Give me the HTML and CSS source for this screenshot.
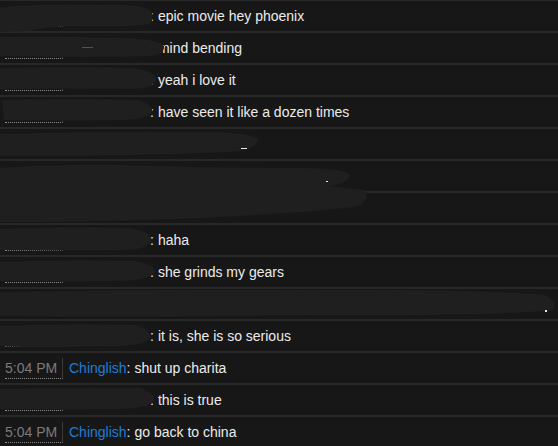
FILE: index.html
```html
<!DOCTYPE html>
<html>
<head>
<meta charset="utf-8">
<link rel="stylesheet" href="styles.css">
</head>
<body>
<div class="chat">
  <div class="row"><span class="time">5:03 PM</span><span class="name hidden">user</span><span class="sep">:</span><span class="msg">epic movie hey phoenix</span></div>
  <div class="row"><span class="time">5:03 PM</span><span class="name hidden">user</span><span class="sep">:</span><span class="msg">mind bending</span></div>
  <div class="row"><span class="time">5:03 PM</span><span class="name hidden">user</span><span class="sep">:</span><span class="msg">yeah i love it</span></div>
  <div class="row"><span class="time">5:03 PM</span><span class="name hidden">user</span><span class="sep">:</span><span class="msg">have seen it like a dozen times</span></div>
  <div class="row"><span class="time">5:03 PM</span></div>
  <div class="row"><span class="time notime"></span></div>
  <div class="row"><span class="time">5:03 PM</span></div>
  <div class="row"><span class="time">5:04 PM</span><span class="name hidden">user</span><span class="sep">:</span><span class="msg">haha</span></div>
  <div class="row"><span class="time">5:04 PM</span><span class="name hidden">user</span><span class="sep">:</span><span class="msg">she grinds my gears</span></div>
  <div class="row"><span class="time short">5:04 PM</span></div>
  <div class="row"><span class="time">5:04 PM</span><span class="name hidden">user</span><span class="sep">:</span><span class="msg">it is, she is so serious</span></div>
  <div class="row"><span class="time">5:04 PM</span><span class="name">Chinglish</span><span class="sep">:</span><span class="msg">shut up charita</span></div>
  <div class="row"><span class="time">5:04 PM</span><span class="name hidden">user</span><span class="sep">:</span><span class="msg">this is true</span></div>
  <div class="row"><span class="time">5:04 PM</span><span class="name">Chinglish</span><span class="sep">:</span><span class="msg">go back to china</span></div>

  <svg class="scribble" width="558" height="446" viewBox="0 0 558 446">
    <g fill="#1f1f1f">
      <path d="M-4 8 Q40 3 100 5 Q140 4 150 10 Q156 16 150 24 Q120 28 70 26 Q40 28 30 31 L0 32 Z"/>
      <path d="M-4 37 Q60 36 120 38 Q160 39 164 46 Q165 54 150 56 Q80 58 20 56 L-4 56 Z"/>
      <path d="M-4 68 Q70 66 130 68 Q156 70 156 80 Q154 89 130 89 Q60 88 20 89 L-4 89 Z"/>
      <path d="M2 100 Q70 98 135 100 Q153 103 152 111 Q150 120 120 120 Q60 121 4 120 Z"/>
      <path d="M-4 134 Q100 131 200 132 Q255 132 258 140 Q256 150 230 152 Q130 156 40 156 L-4 156 Z"/>
      <path d="M-4 168 Q60 164 120 165 Q200 168 300 168 Q350 168 350 176 Q345 184 330 186 Q345 188 365 190 Q370 198 360 206 Q320 212 200 218 Q100 222 20 222 L-4 222 Z"/>
      <path d="M-4 229 Q60 226 130 228 Q152 232 151 240 Q150 250 120 250 Q60 251 -4 250 Z"/>
      <path d="M-4 262 Q70 259 135 261 Q156 265 155 272 Q150 281 110 281 Q50 282 -4 281 Z"/>
      <path d="M-4 292 Q150 289 300 290 Q480 289 545 295 Q558 302 553 310 Q500 316 300 315 Q120 318 -4 316 Z"/>
      <path d="M-4 326 Q70 323 135 325 Q152 330 150 338 Q146 346 110 346 Q50 348 -4 346 Z"/>
      <path d="M-4 389 Q70 387 140 388 Q156 393 154 401 Q150 409 110 409 Q50 410 -4 409 Z"/>
    </g>
    <g fill="#e8e8e8">
      <rect x="241" y="148" width="6" height="1"/>
      <rect x="326" y="181" width="2" height="1"/>
      <rect x="545" y="310" width="2" height="2"/>
    </g>
    <g fill="#1a5fa0">
      <rect x="82" y="47" width="11" height="1"/>
    </g>
  </svg>
</div>
</body>
</html>
```
FILE: styles.css
```css
html, body {
  margin: 0;
  padding: 0;
  background: #171717;
}

.chat {
  position: relative;
  width: 558px;
  height: 446px;
  overflow: hidden;
  border-top: 1px solid #282828;
  box-sizing: border-box;
  font-family: "Liberation Sans", Arial, sans-serif;
  font-size: 14px;
}

.row {
  display: flex;
  align-items: flex-start;
  height: 30px;
  padding: 5px 0 0 5px;
  box-sizing: border-box;
  border-bottom: 2px solid #282828;
  height: 32px;
  white-space: nowrap;
}

.time {
  display: inline-block;
  box-sizing: border-box;
  width: 58px;
  height: 21px;
  line-height: 20px;
  padding-right: 5px;
  color: #7b7b7b;
  border-right: 1px solid #3a3a3a;
  border-bottom: 1px dotted #8a8a8a;
}

.name {
  margin-left: 6px;
  line-height: 20px;
  color: #1f7ed6;
}

.name.hidden {
  display: inline-block;
  width: 81px;
  color: transparent;
}

.sep {
  line-height: 20px;
  color: #e6e6e6;
  margin-right: 4px;
}

.msg {
  line-height: 20px;
  color: #ececec;
}

.scribble {
  position: absolute;
  top: -1px;
  left: 0;
}
```
